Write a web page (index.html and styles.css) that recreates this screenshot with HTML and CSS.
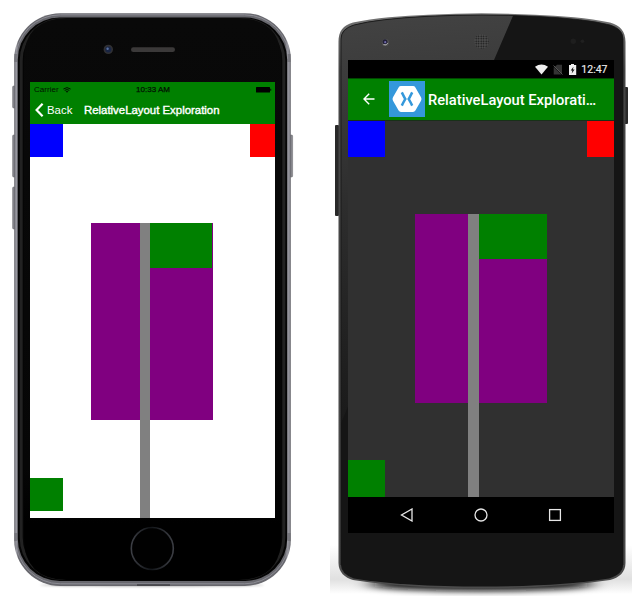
FILE: index.html
```
<!DOCTYPE html>
<html lang="en">
<head>
<meta charset="utf-8">
<title>RelativeLayout Exploration</title>
<link rel="stylesheet" href="styles.css">
</head>
<body>
<main class="stage">
  <section class="phone ios">
    <svg class="shell" viewBox="0 0 320 600" aria-hidden="true">
      <defs>
        <linearGradient id="rim" x1="0" x2="1" y1="0" y2="0">
          <stop offset="0" stop-color="#626268"/><stop offset=".008" stop-color="#a0a0a8"/><stop offset=".014" stop-color="#68686e"/>
          <stop offset=".98" stop-color="#68686e"/><stop offset=".99" stop-color="#a0a0a8"/><stop offset="1" stop-color="#626268"/>
        </linearGradient>
        <linearGradient id="glass" x1="0" x2="0" y1="0" y2="1">
          <stop offset="0" stop-color="#090909"/><stop offset=".8" stop-color="#060606"/><stop offset=".9" stop-color="#000"/>
        </linearGradient>
        <linearGradient id="home" x1="0" x2="1" y1="0" y2="0">
          <stop offset="0" stop-color="#3c3e44"/><stop offset=".45" stop-color="#121519"/><stop offset="1" stop-color="#3c3e44"/>
        </linearGradient>
        <filter id="soft" x="-10%" width="120%" y="-200%" height="500%"><feGaussianBlur stdDeviation="1"/></filter>
      </defs>
      <ellipse cx="152" cy="585" rx="112" ry="1.6" fill="#aaa" filter="url(#soft)"/>
      <g fill="#85858b" stroke="#66666b" stroke-width=".5">
        <rect x="12.6" y="86" width="3" height="22" rx="1"/><rect x="12.6" y="135" width="3" height="42" rx="1"/>
        <rect x="12.6" y="187" width="3" height="42" rx="1"/><rect x="289.6" y="135" width="3" height="42" rx="1"/>
      </g>
      <rect x="14.2" y="13.2" width="276.6" height="572.8" rx="46" fill="url(#rim)"/>
      <rect x="15.8" y="14.8" width="273.4" height="569" rx="44.5" fill="none" stroke="#8c8c94" stroke-width="1"/>
      <path d="M14.4 58h3M287.6 58h3M14.4 537h3M287.6 537h3" stroke="#66666c" stroke-width="8" opacity=".6"/>
      <rect x="17.8" y="17.6" width="269.4" height="563.4" rx="42" fill="#050505"/>
      <rect x="21.2" y="19.5" width="262.6" height="559" rx="41" fill="none" stroke="#222" stroke-width="3"/>
      <path d="M24 60Q24 19 66 18H239Q281 19 281 60V538Q281 579 239 580H66Q24 579 24 538Z" fill="url(#glass)"/>
      <circle cx="108.3" cy="49.4" r="4.7" fill="#303033"/><circle cx="108.3" cy="49.4" r="3" fill="#192544"/><circle cx="107.6" cy="48.8" r="1.2" fill="#5870a0"/>
      <rect x="131" y="47.3" width="44" height="4.8" rx="2.4" fill="#3b3939"/>
      <circle cx="152.3" cy="548.5" r="21" fill="#010101" stroke="url(#home)" stroke-width="1.6"/>
      <rect x="137" y="584.4" width="33" height="1.2" fill="#37373b"/>
    </svg>
    <div class="screen ios-screen">
      <header class="ios-header">
        <div class="ios-status">
          <span class="carrier">Carrier
            <svg class="ios-wifi" viewBox="0 0 8 6"><path d="M.4 2Q4-.8 7.6 2M1.7 3.4Q4 1.7 6.3 3.4" fill="none" stroke="#001000" stroke-width="1"/><path d="M2.7 4.3Q4 3.5 5.3 4.3L4 5.8Z" fill="#001000"/></svg>
          </span>
          <span class="clock">10:33 AM</span>
          <svg class="battery" viewBox="0 0 16 6"><rect width="14" height="5.6" rx=".5" fill="#000"/><path d="M14.3 1.7h.9v2h-.9z" fill="#000"/></svg>
        </div>
        <div class="ios-nav">
          <svg class="chevron" viewBox="0 0 9 14"><path d="M7.6 .8L1.6 7l6 6.2" fill="none" stroke="#fff" stroke-width="2.2"/></svg>
          <span class="back">Back</span>
          <h1 class="ios-title">RelativeLayout Exploration</h1>
        </div>
      </header>
      <div class="canvas ios-canvas">
        <i class="box blue"></i><i class="box red"></i><i class="box purple"></i><i class="box bar"></i><i class="box inner"></i><i class="box corner"></i>
      </div>
    </div>
  </section>

  <section class="phone android">
    <svg class="shell" viewBox="320 0 320 600" aria-hidden="true">
      <defs>
        <linearGradient id="edge" x1="0" x2="0" y1="0" y2="1">
          <stop offset="0" stop-color="#777"/><stop offset=".1" stop-color="#444"/><stop offset="1" stop-color="#4b4b4b"/>
        </linearGradient>
        <linearGradient id="sheen" gradientUnits="userSpaceOnUse" x1="350" y1="20" x2="385" y2="430">
          <stop offset="0" stop-color="#424242"/><stop offset=".45" stop-color="#2d2d2d"/><stop offset="1" stop-color="#191919"/>
        </linearGradient>
        <pattern id="mesh" width="2.5" height="2.5" patternUnits="userSpaceOnUse"><rect width="2.5" height="2.5" fill="#505050"/><circle cx="1.2" cy="1.2" r=".85" fill="#151515"/></pattern>
        <linearGradient id="fade" x1="0" x2="0" y1="0" y2="1"><stop offset="0" stop-color="#ccc" stop-opacity="0"/><stop offset=".7" stop-color="#ccc" stop-opacity=".6"/><stop offset="1" stop-color="#ccc" stop-opacity="0"/></linearGradient>
        <filter id="shade" x="-25%" width="150%" y="-150%" height="400%"><feGaussianBlur stdDeviation="9 3"/></filter>
        <clipPath id="floor"><rect x="330" y="540" width="302" height="56"/></clipPath>
        <clipPath id="face"><path d="M341 39Q341 29 354 25Q378 18.8 428 16.3Q456 15 482 15T536 16.3Q586 18.8 610 25Q623 29 623 39V565Q623 574 609 578.5Q560 586.5 482 586.5T354 578.5Q341 574 341 565Z"/></clipPath>
      </defs>
      <rect x="330" y="545" width="302" height="49" fill="url(#fade)"/>
      <g clip-path="url(#floor)"><ellipse cx="481" cy="584" rx="113" ry="7" fill="#111" filter="url(#shade)"/></g>
      <rect x="335" y="125" width="4" height="91" rx="1" fill="#292929"/>
      <rect x="624" y="87" width="4" height="37" rx="1" fill="#292929"/>
      <path d="M338.5 42C338.5 31 343 25.5 353 22.5C374 18 403 16 428 14.8Q456 13.3 481.5 13.3T535 14.8C560 16 589 18 610 22.5C620 25.5 625.5 31 625.5 42V563C625.5 572 619 578 610 580Q555 588.3 481.5 588.3T353 580C345 578 338.5 572 338.5 563Z" fill="url(#edge)"/>
      <g clip-path="url(#face)">
        <rect x="338" y="12" width="288" height="577" fill="#151515"/>
        <path d="M338 12H514.6L494 60L338 430Z" fill="url(#sheen)"/>
      </g>
      <path d="M341 565V39Q341 29 354 25Q378 18.8 428 16.3Q456 15 482 15T536 16.3Q586 18.8 610 25Q623 29 623 39V565" fill="none" stroke="#151515" stroke-width=".8"/>
      <circle cx="385.4" cy="42.5" r="3.5" fill="#555"/><circle cx="385" cy="41.8" r="2.5" fill="#222037"/><circle cx="385.2" cy="42.2" r="1.1" fill="#6f68a8"/><path d="M383.4 44.6Q386.5 46 387.8 43" fill="none" stroke="#aaa" stroke-width="1"/>
      <circle cx="481.5" cy="41.5" r="7.3" fill="url(#mesh)"/>
      <circle cx="573.3" cy="41.2" r="2.7" fill="#1e1e1e"/><circle cx="582.4" cy="41.2" r="1.8" fill="#202020"/>
    </svg>
    <div class="screen android-screen">
      <div class="android-status">
        <svg class="signals" viewBox="0 0 43 12">
          <path d="M0 2.7Q6.5-1.5 13 2.7L6.5 10.6Z" fill="#eee"/>
          <path d="M22 .8h5v9.5L19.5 3.2M18.7 3v7.5h7.8" fill="#343434"/><path d="M18.5 1.5l9 9" stroke="#565656" stroke-width="1"/>
          <path d="M36 0h3v1h2.2v10H34V1h2z" fill="#eee"/><path d="M38.5 2.7l-2.8 3.8h1.7l-.7 3 2.9-4h-1.7z" fill="#111"/>
        </svg>
        <span>12:47</span>
      </div>
      <header class="android-nav">
        <svg class="arrow" viewBox="0 0 12 12"><path d="M11.5 6H1M6.2.7L1 6l5.2 5.3" fill="none" stroke="#fff" stroke-width="1.4"/></svg>
        <svg class="app-icon" viewBox="0 0 36 36"><rect width="36" height="36" fill="#3498db"/><path d="M12 5H24Q25.6 5 26.4 6.4L32 16.3Q33 18 32 19.7L26.4 29.6Q25.6 31 24 31H12Q10.4 31 9.6 29.6L4 19.7Q3 18 4 16.3L9.6 6.4Q10.4 5 12 5Z" fill="#fff"/><path d="M12.8 11.4Q15.7 17.2 16.3 18Q15.7 18.8 12.8 24.6M23.2 11.4Q20.3 17.2 19.7 18Q20.3 18.8 23.2 24.6" fill="none" stroke="#3498db" stroke-width="2.5"/></svg>
        <h1 class="android-title">RelativeLayout Explorati…</h1>
      </header>
      <div class="canvas android-canvas">
        <i class="box blue"></i><i class="box red"></i><i class="box purple"></i><i class="box bar"></i><i class="box inner"></i><i class="box corner"></i>
      </div>
      <nav class="softkeys">
        <svg viewBox="0 0 14 14"><path d="M12 1V13L1.5 7Z"/></svg>
        <svg viewBox="0 0 14 14"><circle cx="7" cy="7" r="6"/></svg>
        <svg viewBox="0 0 14 14"><rect x="1.6" y="1.6" width="10.8" height="10.8"/></svg>
      </nav>
    </div>
  </section>
</main>
</body>
</html>
```
FILE: styles.css
```
* { box-sizing: border-box; }
body { margin: 0; background: #fff; }
svg { display: block; flex: none; }
h1 { margin: 0; white-space: nowrap; }

.stage { display: flex; width: 640px; height: 600px; overflow: hidden; }
.phone { position: relative; width: 320px; height: 600px; flex: none; }
.shell { position: absolute; inset: 0; width: 320px; height: 600px; }
.screen { position: relative; display: flex; flex-direction: column; overflow: hidden; }
.ios { padding: 82px 45px 82px 30px; }
.ios-screen { height: 436px; background: #fff; font-family: "Liberation Sans", Arial, sans-serif; }
.ios-header { height: 42px; background: #008000; flex: none; }
.ios-status { display: grid; grid-template-columns: 1fr auto 1fr; align-items: center; height: 15px; padding: 0 3px 0 4px; font-size: 8px; line-height: 15px; color: #001000; }
.carrier { display: flex; align-items: center; gap: 4px; letter-spacing: .05px; }
.ios-wifi { width: 8px; height: 6px; }
.clock { font-size: 8px; -webkit-text-stroke: .25px #001000; }
.battery { width: 16px; height: 6px; justify-self: end; }
.ios-nav { display: flex; align-items: center; height: 26px; padding-left: 5px; color: #fff; }
.chevron { width: 9px; height: 14px; }
.back { width: 37px; margin-left: 3px; font-size: 11.4px; }
.ios-title { font-size: 11.4px; line-height: 16px; font-weight: normal; -webkit-text-stroke: .4px #fff; }

.canvas { position: relative; flex: 1; }
.box { position: absolute; }
.blue { top: 0; left: 0; background: #0000ff; }
.red { top: 0; right: 0; background: #ff0000; }
.purple { background: #800080; }
.bar { background: #808080; bottom: 0; }
.inner, .corner { background: #008000; }
.corner { left: 0; }
.ios-canvas .blue { width: 32.7px; height: 32.7px; }
.ios-canvas .red { width: 24.6px; height: 32.7px; }
.ios-canvas .purple { left: 61px; top: 98.7px; width: 122.4px; height: 197px; }
.ios-canvas .bar { left: 110px; top: 98.7px; width: 10px; }
.ios-canvas .inner { left: 120px; top: 98.7px; width: 62px; height: 45.6px; }
.ios-canvas .corner { top: 354.4px; width: 32.7px; height: 32.7px; }

.android { padding: 60px 26px 67px 28px; }
.android-screen { height: 473px; background: #303030; font-family: Roboto, sans-serif; color: #fff; }
.android-status { display: flex; justify-content: flex-end; align-items: center; gap: 3px; height: 18px; flex: none; padding: 1px 6.5px 0 0; background: #000; font-size: 10.5px; line-height: 18px; color: #eee; -webkit-text-stroke: .15px #eee; }
.signals { width: 43px; height: 12px; }
.android-nav { display: flex; align-items: center; height: 42px; flex: none; padding: 0 0 1px 15px; background: #008000; border-top: 1px solid #004800; }
.arrow { width: 12px; height: 12px; }
.app-icon { width: 36px; height: 36px; margin-left: 14.4px; }
.android-title { margin: 2px 0 0 2.6px; font-size: 14.7px; line-height: 20px; font-weight: 500; }
.android-canvas { border-top: 1px solid #183018; }
.android-canvas .blue { width: 37px; height: 36px; }
.android-canvas .red { width: 26.6px; height: 36px; }
.android-canvas .purple { left: 67px; top: 93px; width: 132px; height: 189px; }
.android-canvas .bar { left: 119.8px; top: 93px; width: 11px; }
.android-canvas .inner { left: 131px; top: 93px; width: 68px; height: 45px; }
.android-canvas .corner { top: 339px; width: 37px; height: 37px; }
.softkeys { display: flex; justify-content: center; align-items: center; gap: 60px; height: 36px; background: #000; }
.softkeys svg { width: 14px; height: 14px; fill: none; stroke: #e7e7e7; stroke-width: 1.3; }
```
